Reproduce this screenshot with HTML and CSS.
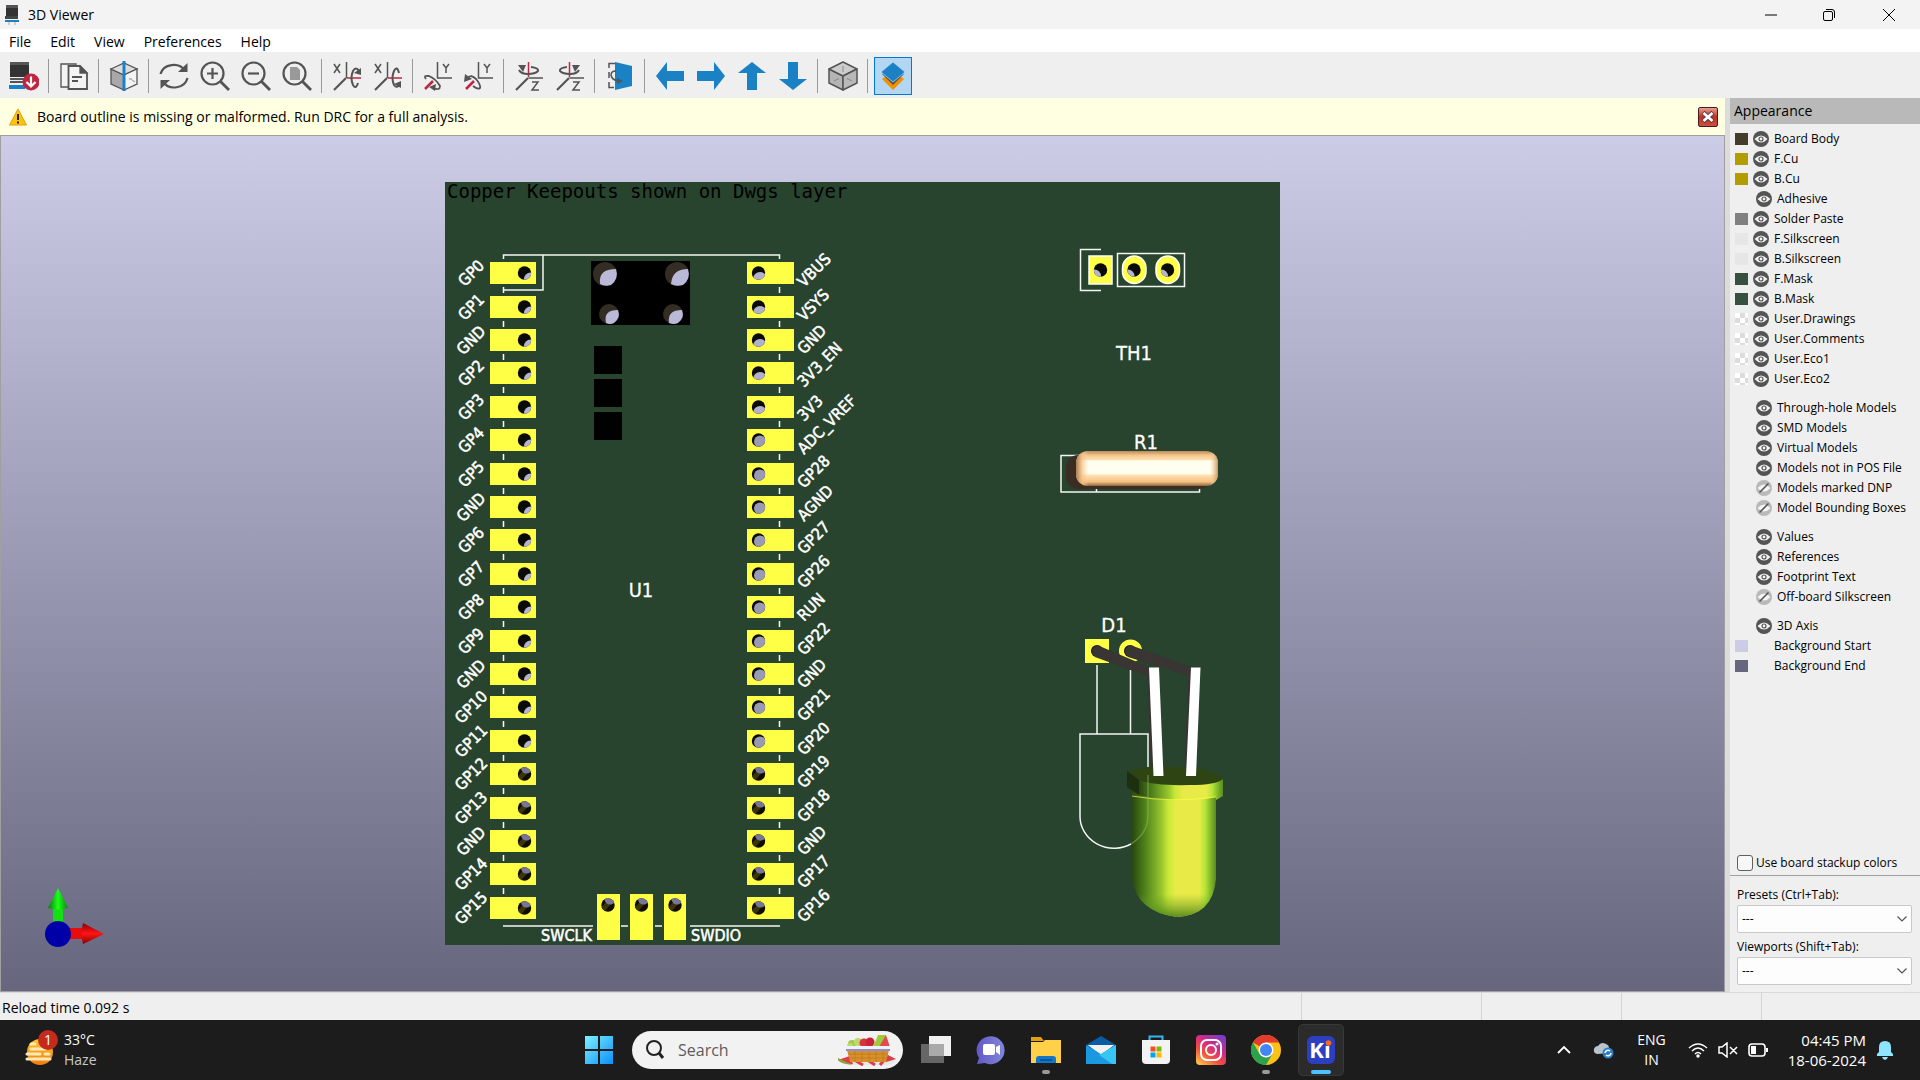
FILE: index.html
```html
<!DOCTYPE html>
<html lang="en">
<head>
<meta charset="utf-8">
<title>3D Viewer</title>
<link rel="stylesheet" href="styles.css">
</head>
<body>
<svg class="defs" width="0" height="0" aria-hidden="true">
  <defs>
    <symbol id="eye" viewBox="0 0 16 16"><circle cx="8" cy="8" r="8" fill="#545454"/><path d="M1.5 8Q8 0.8 14.5 8Q8 15.2 1.5 8Z" fill="#f4f4f4"/><circle cx="8" cy="8" r="2" fill="none" stroke="#545454" stroke-width="1.2"/></symbol>
    <symbol id="eye-off" viewBox="0 0 16 16"><circle cx="8" cy="8" r="8" fill="#b9b9b9"/><path d="M1.5 8Q8 0.8 14.5 8Q8 15.2 1.5 8Z" fill="#f4f4f4"/><path d="M3.5 12.5L12.5 3.5" stroke="#545454" stroke-width="1.6"/></symbol>
    <symbol id="chev" viewBox="0 0 10 6"><path d="M.5.5L5 5L9.500 .5" fill="none" stroke="#555" stroke-width="1.2"/></symbol>
  </defs>
</svg>

<header class="titlebar">
  <svg class="app-icon" viewBox="0 0 14 20"><path d="M1 2Q1 0 3 0H11Q13 0 13 2V11H1Z" fill="#333"/><path d="M1 0H13V3H1Z" fill="#555"/><path d="M0 11H13V14H0Z" fill="#444"/><path d="M0 15H14V17H0Z" fill="#1a81c4"/><path d="M4 17V20M10 17V20" stroke="#aaa"/></svg>
  <h1>3D Viewer</h1>
  <div class="win-buttons">
    <button aria-label="Minimize"><svg viewBox="0 0 12 12"><path d="M0 6H12"/></svg></button>
    <button aria-label="Restore"><svg viewBox="0 0 12 12"><rect x=".5" y="2.500" width="9" height="9" rx="1.500"/><path d="M3 .5H9Q11.500 .5 11.500 3V9"/></svg></button>
    <button aria-label="Close"><svg viewBox="0 0 12 12"><path d="M0 0L12 12M12 0L0 12"/></svg></button>
  </div>
</header>

<nav class="menubar">
  <button>File</button><button>Edit</button><button>View</button><button>Preferences</button><button>Help</button>
</nav>

<div class="toolbar" role="toolbar">
  <button aria-label="Reload board"><svg viewBox="0 0 30 30"><path d="M1 3Q1 1 3 1H18Q20 1 20 3V16H1Z" fill="#333"/><path d="M1 1H20V4H1Z" fill="#555"/><path d="M1 17H17V19H1ZM1 20H15V22H1Z" fill="#555"/><path d="M0 24H16V28H0Z" fill="#1a81c4"/><circle cx="22" cy="21" r="8.500" fill="#bf2641"/><path d="M22 15.500V25M17.500 21L22 25.500L26.500 21" fill="none" stroke="#fff" stroke-width="2.200"/></svg></button>
  <i class="sep"></i>
  <button aria-label="Copy image"><svg viewBox="0 0 30 30" fill="#f4f4f4" stroke="#545454" stroke-width="1.300"><path d="M2 3H17V26H2Z"/><path d="M9.500 5H21L28 12V28H9.500Z" stroke-width="1.800"/><path d="M21 5V12H28Z" fill="#545454"/><path d="M13 16H23M13 20H19" stroke-width="1.800"/></svg></button>
  <i class="sep"></i>
  <button aria-label="Raytracing"><svg viewBox="0 0 30 30" stroke="#545454" stroke-width="1.300"><path d="M2 8L15 14V29L2 23Z" fill="#a8a8a8"/><path d="M2 8L15 2L28 8L15 14Z" fill="#ddd"/><path d="M28 8V23L15 29V14Z" fill="#f4f4f4"/><path d="M20 18H23M26 21L23 19" stroke="#aaa"/><path d="M15 0V30" stroke="#1a81c4" stroke-width="3"/></svg></button>
  <i class="sep"></i>
  <button aria-label="Refresh"><svg viewBox="0 0 30 30" fill="none" stroke="#545454" stroke-width="2.200"><path d="M1.500 13A13.500 12 0 0 1 26 9.500"/><path d="M28.500 17A13.500 12 0 0 1 4 21"/><path d="M28.500 2V11H19Z" fill="#545454" stroke="none"/><path d="M1.500 28V19H11Z" fill="#545454" stroke="none"/></svg></button>
  <button aria-label="Zoom in"><svg viewBox="0 0 30 30" fill="none" stroke="#545454" stroke-width="2.200"><circle cx="12.500" cy="12.500" r="11"/><path d="M20.500 20.500L29 29" stroke-width="2.800"/><path d="M7 12.500H18M12.500 7V18"/></svg></button>
  <button aria-label="Zoom out"><svg viewBox="0 0 30 30" fill="none" stroke="#545454" stroke-width="2.200"><circle cx="12.500" cy="12.500" r="11"/><path d="M20.500 20.500L29 29" stroke-width="2.800"/><path d="M7 12.500H18"/></svg></button>
  <button aria-label="Zoom to fit"><svg viewBox="0 0 30 30" fill="none" stroke="#545454" stroke-width="2.200"><circle cx="12.500" cy="12.500" r="11"/><path d="M20.500 20.500L29 29" stroke-width="2.800"/><path d="M8 6H15L18 9V19H8Z" fill="#999" stroke="none"/></svg></button>
  <i class="sep"></i>
  <button aria-label="Rotate X clockwise"><svg viewBox="0 0 30 30" fill="none" stroke="#545454" stroke-width="1.500"><path d="M2 3L8 12M8 3L2 12M14.500 1V17"/><path d="M14 17L2 29" stroke-width="2.200"/><path d="M15 17H29" stroke="#bf2641"/><path d="M27 10Q24 5 21 10Q18 17 21 24Q24 29 26 22" stroke-width="2"/><path d="M29 7V14L22 12Z" fill="#545454" stroke="none"/></svg></button>
  <button aria-label="Rotate X counterclockwise"><svg viewBox="0 0 30 30" fill="none" stroke="#545454" stroke-width="1.500"><path d="M2 3L8 12M8 3L2 12M14.500 1V17"/><path d="M14 17L2 29" stroke-width="2.200"/><path d="M15 17H29" stroke="#bf2641"/><path d="M26 12Q24 4 21 10Q18 17 21 24Q24 28 27 23" stroke-width="2"/><path d="M28 27V20L21 23Z" fill="#545454" stroke="none"/></svg></button>
  <i class="sep"></i>
  <button aria-label="Rotate Y clockwise"><svg viewBox="0 0 30 30" fill="none" stroke="#545454" stroke-width="1.500"><path d="M14.500 1V17H29M20 3L23 7L26 3M23 7V12"/><path d="M10 20L2 28" stroke="#bf2641" stroke-width="2.500"/><path d="M3 18Q0 14 6 15Q13 18 17 25Q17 30 10 27" stroke-width="1.800"/><path d="M6 26L13 23L12 30Z" fill="#545454" stroke="none"/></svg></button>
  <button aria-label="Rotate Y counterclockwise"><svg viewBox="0 0 30 30" fill="none" stroke="#545454" stroke-width="1.500"><path d="M14.500 1V17H29M20 3L23 7L26 3M23 7V12"/><path d="M10 20L2 28" stroke="#bf2641" stroke-width="2.500"/><path d="M4 17Q7 13 12 18Q17 24 16 27Q14 29 9 25" stroke-width="1.800"/><path d="M0 21L1 13L8 18Z" fill="#545454" stroke="none"/></svg></button>
  <i class="sep"></i>
  <button aria-label="Rotate Z clockwise"><svg viewBox="0 0 30 30" fill="none" stroke="#545454" stroke-width="1.500"><path d="M14.500 17H29M18 21H24L18 29H25"/><path d="M14 17L2 29" stroke-width="2.200"/><path d="M14.500 1V16" stroke="#bf2641"/><path d="M17 6Q25 7 24 10Q21 13 14 13Q7 13 5 9" stroke-width="2"/><path d="M4 4H12L9 11Z" fill="#545454" stroke="none"/></svg></button>
  <button aria-label="Rotate Z counterclockwise"><svg viewBox="0 0 30 30" fill="none" stroke="#545454" stroke-width="1.500"><path d="M14.500 17H29M18 21H24L18 29H25"/><path d="M14 17L2 29" stroke-width="2.200"/><path d="M14.500 1V16" stroke="#bf2641"/><path d="M12 6Q4 7 5 10Q8 13 15 13Q22 13 24 9" stroke-width="2"/><path d="M25 4H17L20 11Z" fill="#545454" stroke="none"/></svg></button>
  <i class="sep"></i>
  <button aria-label="Flip board"><svg viewBox="0 0 30 30" fill="none" stroke="#545454" stroke-width="1.500"><path d="M10 2.500H4V7M4 11V17M4 21V26.500H9"/><path d="M10 1L27 5V25L10 29Z" fill="#1a81c4" stroke="none"/><path d="M11 10Q6 10 6 14Q7 19 13 20"/><path d="M12 17L18 20L12 23Z" fill="#545454" stroke="none"/></svg></button>
  <i class="sep"></i>
  <button aria-label="Move left"><svg viewBox="0 0 30 30"><path d="M1 15L12 1V10H29V20H12V29Z" fill="#1a81c4"/></svg></button>
  <button aria-label="Move right"><svg viewBox="0 0 30 30"><path d="M29 15L18 1V10H1V20H18V29Z" fill="#1a81c4"/></svg></button>
  <button aria-label="Move up"><svg viewBox="0 0 30 30"><path d="M15 1L29 12H20V29H10V12H1Z" fill="#1a81c4"/></svg></button>
  <button aria-label="Move down"><svg viewBox="0 0 30 30"><path d="M15 29L29 18H20V1H10V18H1Z" fill="#1a81c4"/></svg></button>
  <i class="sep"></i>
  <button aria-label="Orthographic projection"><svg viewBox="0 0 30 30" stroke="#545454" stroke-width="1.500" stroke-linejoin="round"><path d="M1 8L15 15V29L1 22Z" fill="#b5b5b5"/><path d="M1 8L15 1L29 8L15 15Z" fill="#ccc"/><path d="M29 8V22L15 29V15Z" fill="#b9b9b9"/><path d="M15 5V11M6 20L11 17.500M24 20L19 17.500" stroke="#888" stroke-width="1"/></svg></button>
  <i class="sep"></i>
  <button class="active" aria-label="Appearance manager" aria-pressed="true"><svg viewBox="0 0 30 30"><path d="M4 18L15 10L26 18L15 29Z" fill="#f29100"/><path d="M4 13L15 8L26 13L15 24Z" fill="#545454"/><path d="M3 11L15 1L27 11L15 21Z" fill="#1a81c4" stroke="#b3d6f3" stroke-width=".8"/></svg></button>
</div>

<main class="workspace">
  <section class="view">
    <div class="infobar">
      <svg class="warn" viewBox="0 0 18 18"><path d="M9 1L17.500 17H.5Z" fill="#ffc20e" stroke="#e0a010" stroke-linejoin="round"/><path d="M9 6V12M9 13.500V15.500" stroke="#222" stroke-width="2"/></svg>
      <p>Board outline is missing or malformed. Run DRC for a full analysis.</p>
      <button aria-label="Dismiss"><svg viewBox="0 0 20 20"><path d="M4.500 5L15.500 15M15.500 5L4.500 15" stroke="#5a3a40" stroke-width="5"/><path d="M5 5.500L15 14.500M15 5.500L5 14.500" stroke="#fff" stroke-width="3"/></svg></button>
    </div>
    <div class="canvas">
      <svg viewBox="1 136 1723 855" role="img" aria-label="Board model">
        <defs>
          <clipPath id="hole"><circle r="6.700"/></clipPath>
          <g id="hole-l"><circle r="6.700" fill="#0a0a06"/><g clip-path="url(#hole)"><circle cx="6" cy="6" r="6.500" fill="#b4b3d1"/></g></g>
          <g id="hole-r"><circle r="6.700" fill="#0a0a06"/><g clip-path="url(#hole)"><circle cx="1.500" cy="6" r="7" fill="#b1b0cd"/></g></g>
          <g id="hole-m"><circle r="6.700" fill="#0a0a06"/><g clip-path="url(#hole)"><circle cx="1.500" cy="1.500" r="6" fill="#9b9ab5"/></g></g>
          <g id="hole-d"><circle r="6.700" fill="#0f0d02"/><g clip-path="url(#hole)"><path d="M-7 3L0 -5L4 -2L-4 7Z" fill="#3c3508"/><circle cx="2" cy="-6" r="5.500" fill="#77769a"/></g></g>
          <g id="pads"><path d="M490 0H536V22H490ZM747 0H794V22H747Z" fill="#ffff45"/><path d="M503.500 25V31M779.500 25V31" stroke="#fff" stroke-width="1.500"/></g>
          <g id="row-a"><use href="#pads"/><use href="#hole-l" x="524.500" y="11"/><use href="#hole-r" x="758.500" y="11"/></g>
          <g id="row-b"><use href="#pads"/><use href="#hole-l" x="524.500" y="11"/><use href="#hole-m" x="758.500" y="11"/></g>
          <g id="row-c"><use href="#pads"/><use href="#hole-d" x="524.500" y="11"/><use href="#hole-d" x="758.500" y="11"/></g>
          <linearGradient id="res" x2="0" y2="1"><stop offset="0" stop-color="#b98b5c"/><stop offset=".12" stop-color="#f5c48c"/><stop offset=".25" stop-color="#ffe0b0"/><stop offset=".28" stop-color="#ffffef"/><stop offset=".64" stop-color="#ffffef"/><stop offset=".7" stop-color="#ffe0b0"/><stop offset=".88" stop-color="#f5c082"/><stop offset="1" stop-color="#8a6640"/></linearGradient>
          <linearGradient id="res-end"><stop offset="0" stop-color="#a87a4b"/><stop offset=".04" stop-color="#f2bd82" stop-opacity=".8"/><stop offset=".09" stop-color="#ffd9a5" stop-opacity="0"/><stop offset=".94" stop-color="#ffd9a5" stop-opacity="0"/><stop offset="1" stop-color="#c49560"/></linearGradient>
          <linearGradient id="led"><stop offset="0" stop-color="#29470f"/><stop offset=".15" stop-color="#4d801b"/><stop offset=".35" stop-color="#97c52e"/><stop offset=".43" stop-color="#c8e838"/><stop offset=".52" stop-color="#e8ea48"/><stop offset=".8" stop-color="#e8ea48"/><stop offset=".87" stop-color="#b5e637"/><stop offset="1" stop-color="#548c1e"/></linearGradient>
          <linearGradient id="led-low" x2="0" y2="1"><stop offset="0" stop-color="#4a8018" stop-opacity="0"/><stop offset=".82" stop-color="#70a828" stop-opacity="0"/><stop offset="1" stop-color="#4a8018" stop-opacity=".9"/></linearGradient>
          <linearGradient id="cone-g"><stop offset="0" stop-color="#087a08"/><stop offset=".5" stop-color="#1cff1c"/><stop offset="1" stop-color="#078807"/></linearGradient>
          <linearGradient id="cone-r" x2="0" y2="1"><stop offset="0" stop-color="#8a0000"/><stop offset=".5" stop-color="#ff1515"/><stop offset="1" stop-color="#8a0000"/></linearGradient>
        </defs>

        <path d="M445 182H1280V945H445Z" fill="#28442f"/>
        <text class="note" x="447" y="198">Copper Keepouts shown on Dwgs layer</text>

        <!-- U1 outline and keepouts -->
        <path class="silk" d="M503.500 259V255H779.500V259M503.500 290H543V255M503 926H593M621 926H628M655 926H662M690 926H780"/>
        <path d="M591 261H690V325H591ZM594 346H622V374H594ZM594 379H622V407H594ZM594 412H622V440H594Z"/>
        <g fill="#342d24"><circle cx="605" cy="274" r="12"/><circle cx="677" cy="274" r="12"/><circle cx="609" cy="314" r="10"/><circle cx="673" cy="314" r="10"/></g>
        <g fill="#bab9d8"><path d="M600 284Q598 269 616 269Q619 279 611 285Q605 287 600 284Z"/><path d="M671 284Q672 269 688 269Q691 279 683 285Q676 287 671 284Z"/><path d="M606 323Q603 310 618 310Q621 318 614 323Q610 325 606 323Z"/><path d="M669 323Q667 310 682 310Q685 318 678 323Q674 325 669 323Z"/></g>

        <g transform="translate(0 262)"><use href="#row-a"/><text class="pin left" transform="translate(475 15) rotate(-45)">GP0</text><text class="pin" transform="translate(804 26) rotate(-45)">VBUS</text></g>
        <g transform="translate(0 296)"><use href="#row-a"/><text class="pin left" transform="translate(475 15) rotate(-45)">GP1</text><text class="pin" transform="translate(804 26) rotate(-45)">VSYS</text></g>
        <g transform="translate(0 329)"><use href="#row-a"/><text class="pin left" transform="translate(475 15) rotate(-45)">GND</text><text class="pin" transform="translate(804 26) rotate(-45)">GND</text></g>
        <g transform="translate(0 362)"><use href="#row-a"/><text class="pin left" transform="translate(475 15) rotate(-45)">GP2</text><text class="pin" transform="translate(804 26) rotate(-45)">3V3_EN</text></g>
        <g transform="translate(0 396)"><use href="#row-a"/><text class="pin left" transform="translate(475 15) rotate(-45)">GP3</text><text class="pin" transform="translate(804 26) rotate(-45)">3V3</text></g>
        <g transform="translate(0 429)"><use href="#row-b"/><text class="pin left" transform="translate(475 15) rotate(-45)">GP4</text><text class="pin" transform="translate(804 26) rotate(-45)">ADC_VREF</text></g>
        <g transform="translate(0 463)"><use href="#row-b"/><text class="pin left" transform="translate(475 15) rotate(-45)">GP5</text><text class="pin" transform="translate(804 26) rotate(-45)">GP28</text></g>
        <g transform="translate(0 496)"><use href="#row-b"/><text class="pin left" transform="translate(475 15) rotate(-45)">GND</text><text class="pin" transform="translate(804 26) rotate(-45)">AGND</text></g>
        <g transform="translate(0 529)"><use href="#row-b"/><text class="pin left" transform="translate(475 15) rotate(-45)">GP6</text><text class="pin" transform="translate(804 26) rotate(-45)">GP27</text></g>
        <g transform="translate(0 563)"><use href="#row-b"/><text class="pin left" transform="translate(475 15) rotate(-45)">GP7</text><text class="pin" transform="translate(804 26) rotate(-45)">GP26</text></g>
        <g transform="translate(0 596)"><use href="#row-b"/><text class="pin left" transform="translate(475 15) rotate(-45)">GP8</text><text class="pin" transform="translate(804 26) rotate(-45)">RUN</text></g>
        <g transform="translate(0 630)"><use href="#row-b"/><text class="pin left" transform="translate(475 15) rotate(-45)">GP9</text><text class="pin" transform="translate(804 26) rotate(-45)">GP22</text></g>
        <g transform="translate(0 663)"><use href="#row-b"/><text class="pin left" transform="translate(475 15) rotate(-45)">GND</text><text class="pin" transform="translate(804 26) rotate(-45)">GND</text></g>
        <g transform="translate(0 696)"><use href="#row-b"/><text class="pin left" transform="translate(475 15) rotate(-45)">GP10</text><text class="pin" transform="translate(804 26) rotate(-45)">GP21</text></g>
        <g transform="translate(0 730)"><use href="#row-b"/><text class="pin left" transform="translate(475 15) rotate(-45)">GP11</text><text class="pin" transform="translate(804 26) rotate(-45)">GP20</text></g>
        <g transform="translate(0 763)"><use href="#row-c"/><text class="pin left" transform="translate(475 15) rotate(-45)">GP12</text><text class="pin" transform="translate(804 26) rotate(-45)">GP19</text></g>
        <g transform="translate(0 797)"><use href="#row-c"/><text class="pin left" transform="translate(475 15) rotate(-45)">GP13</text><text class="pin" transform="translate(804 26) rotate(-45)">GP18</text></g>
        <g transform="translate(0 830)"><use href="#row-c"/><text class="pin left" transform="translate(475 15) rotate(-45)">GND</text><text class="pin" transform="translate(804 26) rotate(-45)">GND</text></g>
        <g transform="translate(0 863)"><use href="#row-c"/><text class="pin left" transform="translate(475 15) rotate(-45)">GP14</text><text class="pin" transform="translate(804 26) rotate(-45)">GP17</text></g>
        <g transform="translate(0 897)"><path d="M490 0H536V22H490ZM747 0H794V22H747Z" fill="#ffff45"/><use href="#hole-d" x="524.500" y="11"/><use href="#hole-d" x="758.500" y="11"/><text class="pin left" transform="translate(475 15) rotate(-45)">GP15</text><text class="pin" transform="translate(804 26) rotate(-45)">GP16</text></g>

        <path d="M597 894H620V940H597ZM630 894H653V940H630ZM664 894H686V940H664Z" fill="#ffff45"/>
        <use href="#hole-d" x="608" y="905"/><use href="#hole-d" x="641.500" y="905"/><use href="#hole-d" x="675" y="905"/>
        <text class="swd" x="541" y="941">SWCLK</text>
        <text class="swd" x="691" y="941">SWDIO</text>
        <text class="ref" x="641" y="597">U1</text>

        <!-- TH1 header -->
        <path class="silk" d="M1101 249.500H1080.500V290.500H1101M1117.500 253.500H1184.500V286.500H1117.500Z"/>
        <g fill="#ffff45" stroke="#fff" stroke-width="1.500"><path d="M1089 256H1112V284H1089Z"/><rect x="1122.500" y="256" width="23.500" height="27.500" rx="11.700"/><rect x="1156" y="256" width="23.500" height="27.500" rx="11.700"/></g>
        <g transform="translate(1100.500 270) scale(-1 1)"><use href="#hole-l"/></g><g transform="translate(1134 270) scale(-1 1)"><use href="#hole-l"/></g><g transform="translate(1167.500 270) scale(-1 1)"><use href="#hole-l"/></g>
        <text class="ref" x="1134" y="360">TH1</text>

        <!-- R1 resistor -->
        <path class="silk" d="M1080 455.500H1061V492H1199.500V484M1096.500 487V492"/>
        <text class="ref" x="1146" y="449">R1</text>
        <rect x="1066" y="455" width="145" height="34" rx="12" fill="#3b2d23"/>
        <rect x="1076" y="451" width="142" height="35" rx="12" fill="url(#res)"/>
        <rect x="1076" y="451" width="142" height="35" rx="12" fill="url(#res-end)"/>

        <!-- D1 LED -->
        <text class="ref" x="1114" y="632">D1</text>
        <path class="silk" d="M1097 665V734M1130.500 670V734M1148 767V734H1080V817A34 32 0 0 0 1131 844"/>
        <path d="M1085 639H1109V663H1085Z" fill="#ffff45"/><circle cx="1130.500" cy="651" r="11.500" fill="#ffff45"/>
        <circle cx="1097" cy="651" r="6" fill="#111"/><circle cx="1130" cy="651" r="6" fill="#111"/>
        <path d="M1097 645L1149 667L1158 670V777L1151 775L1147 676L1095 657Q1088 650 1097 645Z" fill="#383533"/>
        <path d="M1130 645L1192 667H1200V775L1184 776L1188 676L1128 657Q1121 650 1130 645Z" fill="#383533"/>
        <path d="M1158 670L1188 677L1184 780L1165 775Z" fill="#28442f"/>
        <path d="M1200 668L1206 775H1190Z" fill="#28442f"/>
        <path d="M1132 788H1216V879Q1213 915 1177 917Q1137 912 1132 879Z" fill="url(#led)"/>
        <path d="M1132 788H1216V879Q1213 915 1177 917Q1137 912 1132 879Z" fill="url(#led-low)"/>
        <path d="M1127 771Q1150 765 1180 767Q1218 769 1223 780Q1216 786 1190 786Q1155 786 1139 780Z" fill="#2f4413"/>
        <path d="M1127 771L1139 780V795L1127 787Z" fill="#1c3010"/>
        <path d="M1139 780Q1155 786 1190 785Q1216 785 1223 779V796L1216 800V797Q1180 805 1139 795Z" fill="url(#led)"/>
        <path d="M1132 796Q1170 803 1216 797" fill="none" stroke="#ffff45" stroke-opacity=".7"/>
        <path d="M1148 775V817Q1147 834 1131 844" fill="none" stroke="#98bc60" stroke-opacity=".45" stroke-width="1.500"/>
        <path d="M1149 667.500H1159L1163.500 776H1153.500ZM1191 667.500H1200.500L1196 776H1186Z" fill="#fff"/>

        <!-- axis gizmo -->
        <path d="M53 905H63V925H53Z" fill="#12e012"/><path d="M58 888L68 908Q58 911 48 908Z" fill="url(#cone-g)"/>
        <path d="M68 928H84V939H68Z" fill="#e80c0c"/><path d="M104 934L83 944Q80 934 83 923Z" fill="url(#cone-r)"/>
        <circle cx="58" cy="934" r="13" fill="#0000a8"/>
      </svg>
    </div>
  </section>

  <aside class="panel">
    <h2>Appearance</h2>
    <ul class="layers">
      <li><i class="sw body"></i><button aria-label="Toggle Board Body"><svg><use href="#eye"/></svg></button>Board Body</li>
      <li><i class="sw cu"></i><button aria-label="Toggle F.Cu"><svg><use href="#eye"/></svg></button>F.Cu</li>
      <li><i class="sw cu"></i><button aria-label="Toggle B.Cu"><svg><use href="#eye"/></svg></button>B.Cu</li>
      <li class="plain"><button aria-label="Toggle Adhesive"><svg><use href="#eye"/></svg></button>Adhesive</li>
      <li><i class="sw paste"></i><button aria-label="Toggle Solder Paste"><svg><use href="#eye"/></svg></button>Solder Paste</li>
      <li><i class="sw silkscreen"></i><button aria-label="Toggle F.Silkscreen"><svg><use href="#eye"/></svg></button>F.Silkscreen</li>
      <li><i class="sw silkscreen"></i><button aria-label="Toggle B.Silkscreen"><svg><use href="#eye"/></svg></button>B.Silkscreen</li>
      <li><i class="sw mask"></i><button aria-label="Toggle F.Mask"><svg><use href="#eye"/></svg></button>F.Mask</li>
      <li><i class="sw mask"></i><button aria-label="Toggle B.Mask"><svg><use href="#eye"/></svg></button>B.Mask</li>
      <li><i class="sw user"></i><button aria-label="Toggle User.Drawings"><svg><use href="#eye"/></svg></button>User.Drawings</li>
      <li><i class="sw user"></i><button aria-label="Toggle User.Comments"><svg><use href="#eye"/></svg></button>User.Comments</li>
      <li><i class="sw user"></i><button aria-label="Toggle User.Eco1"><svg><use href="#eye"/></svg></button>User.Eco1</li>
      <li><i class="sw user"></i><button aria-label="Toggle User.Eco2"><svg><use href="#eye"/></svg></button>User.Eco2</li>
    </ul>
    <ul class="layers">
      <li class="plain"><button aria-label="Toggle Through-hole Models"><svg><use href="#eye"/></svg></button>Through-hole Models</li>
      <li class="plain"><button aria-label="Toggle SMD Models"><svg><use href="#eye"/></svg></button>SMD Models</li>
      <li class="plain"><button aria-label="Toggle Virtual Models"><svg><use href="#eye"/></svg></button>Virtual Models</li>
      <li class="plain"><button aria-label="Toggle Models not in POS File"><svg><use href="#eye"/></svg></button>Models not in POS File</li>
      <li class="plain"><button aria-label="Toggle Models marked DNP"><svg><use href="#eye-off"/></svg></button>Models marked DNP</li>
      <li class="plain"><button aria-label="Toggle Model Bounding Boxes"><svg><use href="#eye-off"/></svg></button>Model Bounding Boxes</li>
    </ul>
    <ul class="layers">
      <li class="plain"><button aria-label="Toggle Values"><svg><use href="#eye"/></svg></button>Values</li>
      <li class="plain"><button aria-label="Toggle References"><svg><use href="#eye"/></svg></button>References</li>
      <li class="plain"><button aria-label="Toggle Footprint Text"><svg><use href="#eye"/></svg></button>Footprint Text</li>
      <li class="plain"><button aria-label="Toggle Off-board Silkscreen"><svg><use href="#eye-off"/></svg></button>Off-board Silkscreen</li>
    </ul>
    <ul class="layers">
      <li class="plain"><button aria-label="Toggle 3D Axis"><svg><use href="#eye"/></svg></button>3D Axis</li>
      <li class="color"><i class="sw start"></i>Background Start</li>
      <li class="color"><i class="sw end"></i>Background End</li>
    </ul>
    <label class="stackup"><input type="checkbox">Use board stackup colors</label>
    <div class="presets">
      <label for="presets">Presets (Ctrl+Tab):</label>
      <div class="combo"><select id="presets"><option>---</option></select><svg><use href="#chev"/></svg></div>
      <label for="viewports">Viewports (Shift+Tab):</label>
      <div class="combo"><select id="viewports"><option>---</option></select><svg><use href="#chev"/></svg></div>
    </div>
  </aside>
</main>

<footer class="statusbar"><span>Reload time 0.092 s</span><span></span><span></span><span></span><span></span></footer>

<div class="taskbar">
  <button class="weather">
    <svg viewBox="0 0 36 36"><defs><linearGradient id="sun" x2="0" y2="1"><stop offset="0" stop-color="#ffc928"/><stop offset="1" stop-color="#f07a10"/></linearGradient></defs><circle cx="16" cy="22" r="13" fill="url(#sun)"/><path d="M7 14H11M7 19H21M3 24H16M21 24H25M3 29H26" stroke="#ffe9b8" stroke-width="3" stroke-linecap="round"/><circle cx="24" cy="10" r="10" fill="#c42b1c"/><text x="24" y="15" text-anchor="middle" fill="#fff" font-size="14">1</text></svg>
    <span class="w-text"><span>33°C</span><span class="dim">Haze</span></span>
  </button>
  <div class="apps">
    <button aria-label="Start"><svg viewBox="0 0 30 30"><defs><linearGradient id="win" x2="1" y2="1"><stop offset="0" stop-color="#7ff0ff"/><stop offset="1" stop-color="#0a90f8"/></linearGradient></defs><path d="M1 1H14V14H1ZM16 1H29V14H16ZM1 16H14V29H1ZM16 16H29V29H16Z" fill="url(#win)"/></svg></button>
    <div class="search">
      <svg class="lens" viewBox="0 0 20 20"><circle cx="9" cy="8" r="7" fill="none" stroke="#222" stroke-width="2"/><path d="M14 13L18 18" stroke="#222" stroke-width="3"/></svg>
      <input type="text" placeholder="Search" aria-label="Search">
      <svg class="basket" viewBox="0 0 58 32"><path d="M0 26Q12 20 29 21Q48 20 58 25Q56 31 45 31H14Q3 31 0 26Z" fill="#e8e8e0"/><path d="M0 26L12 22L15 30Q3 30 0 26ZM42 21L50 21L58 25L48 28Z" fill="#dc3c4c"/><path d="M0 24Q10 29 15 31Q3 30 0 26Z" fill="#86a83a"/><path d="M18 27L25 31M31 27L37 31M48 24L42 31" stroke="#dc3c4c" stroke-width="3"/><circle cx="14" cy="10" r="4" fill="#a3c84c"/><circle cx="20" cy="8" r="4" fill="#bddb6a"/><circle cx="12" cy="12" r="3" fill="#bddb6a"/><circle cx="26" cy="9" r="4.500" fill="#dc3040"/><circle cx="32" cy="8" r="4.500" fill="#c82436"/><path d="M35 13L40 1H48L44 13Z" fill="#9dcc3e"/><path d="M41 13L48 1L52 13Z" fill="#e84a4a"/><path d="M9 16H51L48 28H12Z" fill="#d9902c"/><path d="M10 20H50M11 24H49M17 16V28M24 16V28M31 16V28M38 16V28M45 16V28" stroke="#b87820" stroke-width=".7"/><path d="M8 12H52V16H8Z" fill="#eef0fa"/><path d="M8 15H52V17H8Z" fill="#8f8fcb"/></svg>
    </div>
    <button aria-label="Task view"><svg viewBox="0 0 30 30"><path d="M8 1H30V21H8Z" fill="#f0f0f0"/><path d="M0 9H23V28H0Z" fill="#666"/><path d="M8 9H23V21H8Z" fill="#aaa"/></svg></button>
    <button aria-label="Chat"><svg viewBox="0 0 30 30"><defs><linearGradient id="chat" x2="1"><stop offset="0" stop-color="#6458c8"/><stop offset="1" stop-color="#7f87d8"/></linearGradient></defs><path d="M1 29L3 23A14 14 0 1 1 9 28Z" fill="url(#chat)"/><rect x="7" y="9" width="12" height="11" rx="2" fill="#fff"/><path d="M20 12L24 10V20L20 17Z" fill="#fff"/></svg></button>
    <button class="open" aria-label="File Explorer"><svg viewBox="0 0 30 30"><path d="M0 2H10L13 6H0Z" fill="#dfa00e"/><path d="M0 7H12L14 5H30V28H0Z" fill="#ffd048"/><path d="M5 28V24Q5 21 8 21H22Q25 21 25 24V28Z" fill="#1377c8"/><path d="M9 25H21" stroke="#0a4b8a" stroke-width="1.500"/></svg></button>
    <button aria-label="Mail"><svg viewBox="0 0 30 30"><path d="M0 10L15 1L30 10V20H0Z" fill="#0a5aa5"/><path d="M2 10H28L15 20Z" fill="#f1f1f1"/><path d="M0 10L15 19L30 10V29H0Z" fill="#1a98e0"/><path d="M2 10H28L15 19Z" fill="#f1f1f1"/><path d="M30 10L13 20L26 29H30Z" fill="#37c5f5"/></svg></button>
    <button aria-label="Store"><svg viewBox="0 0 30 30"><path d="M8.500 6V1.500H21.500V6" fill="none" stroke="#2eb8ef" stroke-width="2"/><path d="M1 5H29V25Q29 29 25 29H5Q1 29 1 25Z" fill="#f3f3f3"/><path d="M9.500 11.500H14.500V16.500H9.500Z" fill="#f25022"/><path d="M15.500 11.500H20.500V16.500H15.500Z" fill="#7fba00"/><path d="M9.500 17.500H14.500V22.500H9.500Z" fill="#00a4ef"/><path d="M15.500 17.500H20.500V22.500H15.500Z" fill="#ffb900"/></svg></button>
    <button aria-label="Instagram"><svg viewBox="0 0 30 30"><defs><linearGradient id="ig" x1=".1" y1="1" x2=".8" y2="0"><stop offset="0" stop-color="#ffc84a"/><stop offset=".35" stop-color="#f5503c"/><stop offset=".65" stop-color="#d02a86"/><stop offset="1" stop-color="#7a3cc8"/></linearGradient></defs><rect width="30" height="30" rx="4" fill="url(#ig)"/><rect x="5" y="5" width="20" height="20" rx="6" fill="none" stroke="#fff" stroke-width="2"/><circle cx="15" cy="15" r="5" fill="none" stroke="#fff" stroke-width="2"/><circle cx="21" cy="9" r="1.500" fill="#fff"/></svg></button>
    <button class="open" aria-label="Chrome"><svg viewBox="0 0 30 30"><circle cx="15" cy="15" r="15" fill="#fbc116"/><path d="M15 15L2 7.500A15 15 0 0 1 28 7.500H15Z" fill="#e33b2e"/><path d="M2 7.500A15 15 0 0 0 15 30L21.500 18.700H8.500Z" fill="#2ba24c"/><circle cx="15" cy="15" r="7.500" fill="#fff"/><circle cx="15" cy="15" r="6" fill="#4285f4"/></svg></button>
    <button class="current" aria-label="KiCad"><svg viewBox="0 0 30 30"><rect x="1" y="1" width="28" height="28" rx="6" fill="#2b3fc0"/><text x="14" y="23" text-anchor="middle" fill="#fff" font-size="22" font-weight="700">Kı</text><circle cx="22.500" cy="8" r="2.800" fill="#f56a1c"/></svg></button>
  </div>
  <div class="tray">
    <button aria-label="Hidden icons"><svg width="14" height="10" viewBox="0 0 14 10"><path d="M1 8L7 2L13 8" fill="none" stroke="#fff" stroke-width="1.800"/></svg></button>
    <button class="cloud" aria-label="OneDrive"><svg width="22" height="18" viewBox="0 0 22 18"><path d="M4 13Q0 12 1 8Q2 5 5 5Q8 0 13 3Q16 4 16 7Q20 8 19 12Z" fill="#b9c3cc"/><circle cx="15" cy="12" r="5.500" fill="#2d7fc4"/><path d="M12 12A3 3 0 0 1 17 10M18 12A3 3 0 0 1 13 14" fill="none" stroke="#fff" stroke-width="1.500"/></svg></button>
    <button class="lang"><span>ENG</span><span>IN</span></button>
    <button class="net" aria-label="Network, volume and battery">
      <svg width="20" height="16" viewBox="0 0 20 16" fill="none" stroke="#fff" stroke-width="1.500"><path d="M1 6Q10 -2 19 6M4 9Q10 3 16 9M7 12Q10 9 13 12"/><circle cx="10" cy="14" r="1" fill="#fff"/></svg>
      <svg width="20" height="16" viewBox="0 0 20 16" fill="none" stroke="#fff" stroke-width="1.500"><path d="M1 5H4L9 1V15L4 11H1ZM12 5L19 12M19 5L12 12"/></svg>
      <svg width="20" height="14" viewBox="0 0 20 14"><rect x="1" y="1" width="16" height="12" rx="3" fill="none" stroke="#fff" stroke-width="1.600"/><path d="M3 3H8V11H3ZM18 5H20V9H18Z" fill="#fff"/></svg>
    </button>
    <button class="clock"><span>04:45 PM</span><span>18-06-2024</span></button>
    <button aria-label="Notifications"><svg width="16" height="20" viewBox="0 0 16 20"><path d="M0 16V14L2 12V7Q2 1 8 1Q14 1 14 7V12L16 14V16ZM5 17H11Q10 20 8 20Q6 20 5 17Z" fill="#8fe5ff"/></svg></button>
  </div>
</div>
</body>
</html>
```
FILE: styles.css
```css
* { box-sizing: border-box; }
body {
  margin: 0;
  min-height: 100vh;
  display: flex;
  flex-direction: column;
  background: #efefef;
  color: #000;
  font: 14px/20px "Open Sans", "Noto Sans", sans-serif;
}
button {
  border: 0;
  padding: 0;
  background: none;
  color: inherit;
  font: inherit;
}
svg { display: block; }
.defs { position: absolute; }

/* Title and menus */
.titlebar {
  display: flex;
  align-items: center;
  height: 29px;
  padding-left: 5px;
  background: #f3f3f3;
}
.app-icon { width: 14px; height: 20px; }
.titlebar h1 { margin: 0 0 0 9px; flex: 1; font-size: 14px; font-weight: 400; }
.win-buttons { display: flex; }
.win-buttons button { width: 58px; height: 29px; display: grid; place-items: center; }
.win-buttons button:last-child { width: 62px; }
.win-buttons svg { width: 12px; height: 12px; fill: none; stroke: #000; }
.menubar {
  display: flex;
  gap: 19px;
  height: 23px;
  padding: 2px 0 0 9px;
  background: #fff;
}
.toolbar {
  display: flex;
  align-items: center;
  gap: 3px;
  height: 46px;
  padding: 2px 0 0 5px;
}
.toolbar button {
  width: 38px;
  height: 38px;
  display: grid;
  place-items: center;
}
.toolbar svg { width: 30px; height: 30px; }
.toolbar .active { border: 1px solid #0078d7; background: #b3d6f3; }
.sep { width: 1px; height: 34px; margin: 0 3px 0 2px; background: #999; }

/* Workspace */
.workspace { flex: 1; display: flex; background: #dcdcdc; }
.view { flex: 1; display: flex; flex-direction: column; }
.infobar {
  display: flex;
  align-items: center;
  height: 37px;
  padding: 0 7px 0 9px;
  background: #ffffe1;
}
.infobar p { margin: 0 0 0 10px; flex: 1; }
.infobar button {
  width: 20px;
  height: 20px;
  border: 1px solid #501820;
  border-radius: 2px;
  background: linear-gradient(#e8a090, #c03020 50%, #cc5040);
}
.warn { width: 18px; height: 18px; }
.canvas {
  flex: 1;
  border: 1px solid #a0a0a0;
  background: linear-gradient(#cccce6, #66667f);
}
.canvas svg { width: 100%; }
.silk { fill: none; stroke: #f4f6f4; stroke-width: 1.5; }
.canvas text { font-family: "DejaVu Sans Condensed", "DejaVu Sans", sans-serif; fill: #fff; }
.canvas .note { font-family: "DejaVu Sans Mono", monospace; font-size: 19px; fill: #000; }
.canvas .pin { font-size: 16px; stroke: #fff; stroke-width: .5; }
.canvas .left { text-anchor: middle; }
.canvas .swd { font-size: 16px; stroke: #fff; stroke-width: .5; }
.canvas .ref { font-size: 20px; text-anchor: middle; stroke: #fff; stroke-width: .3; }

/* Appearance panel */
.panel {
  width: 190px;
  margin-left: 5px;
  display: flex;
  flex-direction: column;
  background: #efefef;
  font-size: 12px;
}
.panel h2 {
  margin: 0 0 5px;
  padding: 3px 4px;
  background: #b9b9b9;
  font-size: 14px;
  line-height: 20px;
  font-weight: 400;
}
.layers { list-style: none; margin: 0 0 9px; padding: 0 0 0 5px; }
.layers li { display: flex; align-items: center; gap: 5px; height: 20px; white-space: nowrap; }
.layers .plain { padding-left: 21px; }
.layers .color { gap: 26px; }
.layers svg { width: 16px; height: 16px; }
.sw { width: 13px; height: 12px; }
.body { background: #443c29; }
.cu { background: #b39c00; }
.paste { background: #808080; }
.silkscreen { background: #e6e6e6; }
.mask { background: #36513f; }
.user { background: repeating-conic-gradient(#fff 0 25%, #dcdcdc 0 50%) 5px 0 / 10px 10px; }
.start { background: #cccce6; }
.end { background: #66667f; }
.stackup {
  display: flex;
  align-items: center;
  gap: 3px;
  margin-top: auto;
  padding: 0 0 2px 7px;
  border-bottom: 1px solid #a0a0a0;
}
.stackup input {
  appearance: none;
  width: 16px;
  height: 16px;
  margin: 0;
  border: 1px solid #606060;
  border-radius: 3px;
  background: #f7f7f7;
}
.presets { display: flex; flex-direction: column; padding: 9px 8px 7px 7px; }
.combo { display: grid; align-items: center; margin-bottom: 4px; }
.combo:last-child { margin-bottom: 0; }
.combo select, .combo svg { grid-area: 1 / 1; }
.combo select {
  appearance: none;
  height: 28px;
  padding: 0 4px;
  border: 1px solid #c8c8c8;
  border-radius: 2px;
  background: #fdfdfd;
  font: inherit;
}
.combo svg { width: 10px; height: 6px; justify-self: end; margin-right: 5px; pointer-events: none; }

/* Status bar */
.statusbar {
  display: grid;
  grid-template-columns: 1fr 180px 140px 140px 159px;
  height: 28px;
  border-top: 1px solid #d8d8d8;
  line-height: 30px;
}
.statusbar span { padding-left: 2px; }
.statusbar span + span { border-left: 1px solid #d4d4d4; }

/* Taskbar */
.taskbar {
  display: grid;
  grid-template-columns: 1fr auto 1fr;
  align-items: center;
  height: 60px;
  background: #1c1c1c;
  color: #fff;
}
.weather { display: flex; gap: 4px; padding-left: 24px; text-align: left; }
.weather svg { width: 36px; height: 36px; }
.w-text, .lang, .clock { display: flex; flex-direction: column; }
.dim { color: #c8c8c8; }
.apps { display: flex; align-items: center; gap: 11px; }
.apps button {
  width: 44px;
  height: 50px;
  display: grid;
  place-items: center;
  align-content: center;
  border-radius: 4px;
}
.apps button svg { width: 30px; height: 30px; }
.open::after, .current::after {
  content: "";
  width: 8px;
  height: 4px;
  margin: 5px 0 -9px;
  border-radius: 2px;
  background: #999;
}
.apps .current { background: #2b2b2b; box-shadow: 0 0 0 1px #383838; }
.current::after { width: 20px; background: #4cc2ff; }
.search {
  display: flex;
  align-items: center;
  gap: 13px;
  width: 271px;
  height: 38px;
  padding: 0 7px 0 13px;
  border-radius: 19px;
  background: #f2f2f2;
}
.lens { width: 20px; height: 20px; }
.search input {
  flex: 1;
  min-width: 0;
  border: 0;
  padding: 0;
  background: none;
  font: inherit;
  font-size: 16px;
}
.search input::placeholder { color: #5c5c5c; }
.basket { width: 58px; height: 32px; }
.tray { display: flex; align-items: center; justify-content: flex-end; padding-right: 27px; }
.cloud { margin-left: 22px; }
.lang { margin-left: 22px; align-items: center; }
.net { display: flex; align-items: center; gap: 10px; margin-left: 22px; }
.clock { margin: 0 11px 0 20px; align-items: flex-end; font-size: 15px; }
```
